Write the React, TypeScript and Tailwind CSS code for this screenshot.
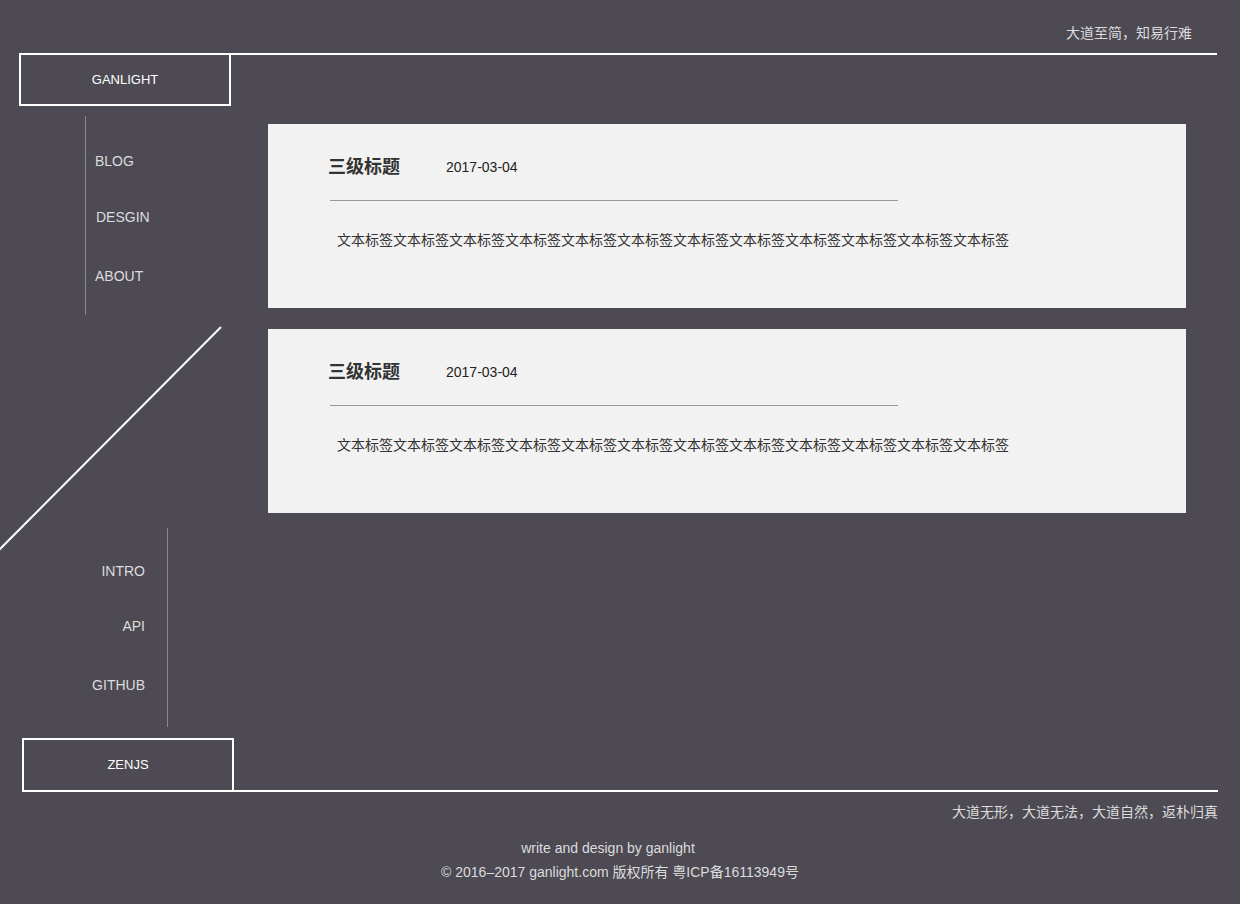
const font = "font-['Liberation_Sans','Noto_Sans_CJK_SC',sans-serif]";

const posts = [
  { title: '三级标题', date: '2017-03-04', body: '文本标签'.repeat(12) },
  { title: '三级标题', date: '2017-03-04', body: '文本标签'.repeat(12) },
];

function PostCard({ title, date, body }: { title: string; date: string; body: string }) {
  return (
    <div className="w-[918px] h-[184px] bg-[#f2f2f2] pl-[60px] pt-[31px]">
      <div className="flex items-center h-[24px]">
        <h3 className="text-[18px] leading-[24px] font-bold text-[#333]">{title}</h3>
        <span className="ml-[46px] text-[14px] leading-[20px] text-[#222]">{date}</span>
      </div>
      <div className="mt-[21px] ml-[2px] w-[568px] h-px bg-[#999]" />
      <p className="mt-[29px] ml-[9px] text-[14px] leading-[20px] text-[#333]">{body}</p>
    </div>
  );
}

export default function App() {
  return (
    <div className={`${font} min-h-[904px] w-[1240px] bg-[#4d4a53] text-[#dcdcdc]`}>
      {/* header */}
      <div className="h-[53px] flex items-end justify-end pr-[48px] pb-[10px]">
        <span className="text-[14px] leading-[20px]">大道至简，知易行难</span>
      </div>
      <div className="ml-[19px] w-[1198px] h-[2px] bg-white" />

      <div className="flex">
        {/* sidebar */}
        <div className="w-[268px] flex flex-col">
          <div className="ml-[19px] w-[212px] h-[51px] border-2 border-t-0 border-white flex items-center justify-center text-[13px] text-white">
            GANLIGHT
          </div>

          <ul className="ml-[85px] mt-[10px] h-[199px] border-l border-[#8a8790] pl-[9px] pt-[35px] text-[14px] leading-[20px]">
            <li>BLOG</li>
            <li className="mt-[36px] ml-px">DESGIN</li>
            <li className="mt-[39px]">ABOUT</li>
          </ul>

          <svg width="230" height="213" className="block overflow-visible">
            <line x1="221" y1="12" x2="-2" y2="236" stroke="#fff" strokeWidth="2" />
          </svg>

          <ul className="w-[168px] h-[199px] border-r border-[#8a8790] pr-[22px] pt-[33px] text-right text-[14px] leading-[20px]">
            <li>INTRO</li>
            <li className="mt-[35px]">API</li>
            <li className="mt-[39px]">GITHUB</li>
          </ul>

          <div className="mt-[11px] ml-[22px] w-[212px] h-[52px] border-2 border-b-0 border-white flex items-center justify-center text-[13px] text-white">
            ZENJS
          </div>
        </div>

        {/* posts */}
        <div className="flex flex-col gap-[21px] pt-[69px]">
          {posts.map((p, i) => (
            <PostCard key={i} {...p} />
          ))}
        </div>
      </div>

      <div className="ml-[22px] w-[1196px] h-[2px] bg-white" />

      {/* footer */}
      <div className="mt-[10px] pr-[22px] text-right text-[14px] leading-[20px]">
        大道无形，大道无法，大道自然，返朴归真
      </div>
      <div className="mt-[14px] text-center text-[14px] leading-[24px]">
        <p className="pr-[24px]">write and design by ganlight</p>
        <p>© 2016–2017 ganlight.com 版权所有 粤ICP备16113949号</p>
      </div>
    </div>
  );
}
